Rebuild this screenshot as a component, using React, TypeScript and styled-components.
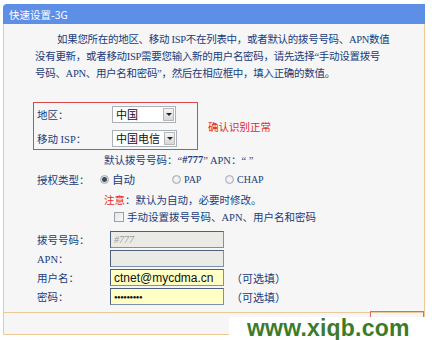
import { createGlobalStyle, styled } from "styled-components";

const COLOR = {
  text: "#203c7a",
  red: "#e02a2a",
  frame: "#ecc998",
  header: "#5e8fe6",
  body: "#f6f6f6",
  fieldBorder: "#7f8fae",
  disabled: "#ebebe6",
  optional: "#ffffc6",
};

const GlobalStyle = createGlobalStyle`
  body {
    margin: 0;
    background: #fff;
    font-family: "Liberation Serif", "Noto Sans CJK SC", serif;
    color: ${COLOR.text};
  }
`;

const Page = styled.div`
  position: relative;
  width: 432px;
  height: 340px;
  padding: 4px 0 0 3px;
  box-sizing: border-box;
  overflow: hidden;
`;

const Panel = styled.div`
  width: 422px;
  display: flex;
  flex-flow: column;
`;

const Header = styled.div`
  height: 20px;
  background: ${COLOR.header};
  border-radius: 4px 0 0 0;
  padding-left: 6px;
  display: flex;
  align-items: center;
  color: #fff;
  font-family: "Noto Sans CJK SC", sans-serif;
  font-size: 10.5px;
`;

const Body = styled.div`
  background: ${COLOR.body};
  border-left: 1px solid ${COLOR.frame};
  border-right: 1px solid ${COLOR.frame};
  padding: 7px 0 6px 29px;
  display: flex;
  flex-flow: column;
  font-size: 10.5px;
`;

const Intro = styled.p`
  margin: 0 0 20px 2px;
  line-height: 17px;
  text-indent: 22px;
  white-space: nowrap;
  letter-spacing: -0.3px;
`;

const HighlightRow = styled.div`
  display: flex;
  align-items: center;
  gap: 10px;
`;

const HighlightBox = styled.div`
  width: 163px;
  border: 1px solid #d9474a;
  padding: 1px 0;
  display: flex;
  flex-flow: column;
  gap: 4px;
`;

const Row = styled.div<{ $h: number; $indent?: number }>`
  height: ${(p) => p.$h}px;
  padding-left: ${(p) => p.$indent ?? 4}px;
  display: flex;
  align-items: center;
  white-space: nowrap;
`;

const Label = styled.span<{ $w?: number }>`
  width: ${(p) => p.$w ?? 63}px;
  flex: none;
`;

const Note = styled.span`
  color: ${COLOR.red};
`;

const Select = styled.div<{ $w: number }>`
  width: ${(p) => p.$w}px;
  height: 17px;
  margin-left: 12px;
  box-sizing: border-box;
  border: 1px solid #a9b0b8;
  background: #fff;
  display: flex;
  align-items: stretch;
  font-family: "Noto Sans CJK SC", sans-serif;
  font-size: 11px;
  color: #111;

  .value {
    flex: 1;
    padding-left: 3px;
    line-height: 15px;
    overflow: hidden;
  }

  .arrow {
    width: 11px;
    margin: 1px;
    background: linear-gradient(#f4f4f4, #d8d8d8);
    border: 1px solid #b8b8b8;
    box-sizing: border-box;
    display: flex;
    align-items: center;
    justify-content: center;
  }

  .arrow::after {
    content: "";
    border-left: 3px solid transparent;
    border-right: 3px solid transparent;
    border-top: 3px solid #222;
  }
`;

const Radio = styled.span<{ $on?: boolean }>`
  width: 9px;
  height: 9px;
  border-radius: 50%;
  border: 1px solid #a8adb4;
  box-sizing: border-box;
  background: radial-gradient(circle, ${(p) => (p.$on ? "#3c4a5c 0 2px" : "#f4f4f4 0 2px")}, #dfe2e6 3px);
  margin-right: 3px;
  flex: none;
`;

const Choice = styled.label<{ $w: number }>`
  width: ${(p) => p.$w}px;
  display: flex;
  align-items: center;
  font-size: 10px;

  .cjk {
    font-family: "Noto Sans CJK SC", sans-serif;
    font-size: 11.5px;
  }
`;

const Check = styled.span`
  width: 10px;
  height: 10px;
  border: 1px solid #9aa0a8;
  background: linear-gradient(135deg, #e4e4e4, #fafafa);
  box-sizing: border-box;
  margin-right: 3px;
`;

const Field = styled.div<{ $bg: string; $muted?: boolean }>`
  width: 114px;
  height: 17px;
  margin-left: 10px;
  box-sizing: border-box;
  border: 1px solid ${COLOR.fieldBorder};
  border-top-color: #4e5f80;
  border-left-color: #4e5f80;
  background: ${(p) => p.$bg};
  padding-left: 3px;
  display: flex;
  align-items: center;
  font-family: ${(p) => (p.$muted ? '"Liberation Serif", serif' : '"Liberation Sans", sans-serif')};
  font-style: ${(p) => (p.$muted ? "italic" : "normal")};
  font-size: ${(p) => (p.$muted ? 10 : 12)}px;
  color: ${(p) => (p.$muted ? "#9a9a9a" : "#111")};
`;

const Dots = styled.span`
  font-size: 6px;
  letter-spacing: -0.5px;
`;

const Hint = styled.span`
  margin-left: 7px;
  font-family: "Noto Sans CJK SC", sans-serif;
  font-size: 11px;
`;

const Footer = styled.div`
  height: 21px;
  background: ${COLOR.body};
  border: 1px solid ${COLOR.frame};
  display: flex;
  justify-content: flex-end;
`;

const NextButton = styled.div`
  width: 54px;
  height: 26px;
  margin-top: -2px;
  border: 1px solid #e06a6a;
  box-sizing: border-box;
`;

const Watermark = styled.div`
  position: absolute;
  left: 229px;
  top: 317px;
  width: 203px;
  height: 23px;
  background: #fff;
  padding-left: 18px;
  box-sizing: border-box;
  color: #3d7b2b;
  font-family: "Liberation Sans", sans-serif;
  font-weight: bold;
  font-size: 23px;
  line-height: 23px;
  letter-spacing: 0.2px;
`;

const App = (): JSX.Element => {
  return (
    <Page>
      <GlobalStyle />
      <Panel>
        <Header>快速设置-3G</Header>
        <Body>
          <Intro>
            如果您所在的地区、移动 ISP不在列表中，或者默认的拨号号码、APN数值
            <br />
            没有更新，或者移动ISP需要您输入新的用户名密码，请先选择“手动设置拨号
            <br />
            号码、APN、用户名和密码”，然后在相应框中，填入正确的数值。
          </Intro>

          <HighlightRow>
            <HighlightBox>
              <Row $h={20} $indent={3}>
                <Label>地区：</Label>
                <Select $w={64}>
                  <span className="value">中国</span>
                  <span className="arrow" />
                </Select>
              </Row>
              <Row $h={20} $indent={3}>
                <Label>移动 ISP：</Label>
                <Select $w={65}>
                  <span className="value">中国电信</span>
                  <span className="arrow" />
                </Select>
              </Row>
            </HighlightBox>
            <Note>确认识别正常</Note>
          </HighlightRow>

          <Row $h={18} $indent={71}>
            默认拨号号码：“<b>#777</b>” APN：“ ”
          </Row>
          <Row $h={22}>
            <Label>授权类型：</Label>
            <Choice $w={72}>
              <Radio $on />
              <span className="cjk">自动</span>
            </Choice>
            <Choice $w={53}>
              <Radio />
              PAP
            </Choice>
            <Choice $w={40}>
              <Radio />
              CHAP
            </Choice>
          </Row>
          <Row $h={18} $indent={71}>
            <Note>注意</Note>：默认为自动，必要时修改。
          </Row>
          <Row $h={17} $indent={81}>
            <Check />
            手动设置拨号号码、APN、用户名和密码
          </Row>

          <Row $h={19} style={{ marginTop: 5 }}>
            <Label>拨号号码：</Label>
            <Field $bg={COLOR.disabled} $muted>
              #777
            </Field>
          </Row>
          <Row $h={19}>
            <Label>APN：</Label>
            <Field $bg={COLOR.disabled} />
          </Row>
          <Row $h={19}>
            <Label>用户名：</Label>
            <Field $bg={COLOR.optional}>ctnet@mycdma.cn</Field>
            <Hint>（可选填）</Hint>
          </Row>
          <Row $h={19}>
            <Label>密码：</Label>
            <Field $bg={COLOR.optional}>
              <Dots>●●●●●●●●●</Dots>
            </Field>
            <Hint>（可选填）</Hint>
          </Row>
        </Body>
        <Footer>
          <NextButton />
        </Footer>
      </Panel>
      <Watermark>www.xiqb.com</Watermark>
    </Page>
  );
};

export default App;
